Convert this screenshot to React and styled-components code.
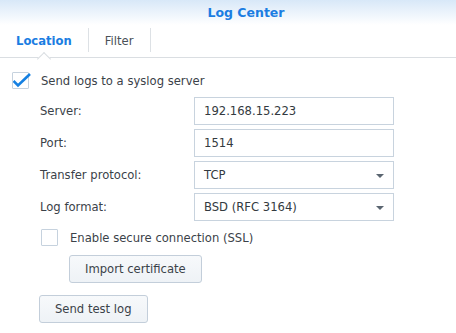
import React from 'react'
import styled, { createGlobalStyle } from 'styled-components'

const Global = createGlobalStyle`
  body {
    margin: 0;
    background: #fff;
    font-family: "DejaVu Sans", Verdana, sans-serif;
    font-size: 11.6px;
    color: #3b4249;
  }
`

const Window = styled.div`
  width: 456px;
  height: 333px;
  background: #fff;
`

const Header = styled.div`
  height: 25px;
  display: flex;
  align-items: center;
  justify-content: center;
  padding-left: 36px;
  background: linear-gradient(to bottom, #d8e8f8, #ffffff);
`

const Title = styled.div`
  font-weight: bold;
  font-size: 12.5px;
  color: #1b7de2;
`

const TabBar = styled.div`
  height: 32px;
  display: flex;
  align-items: center;
  border-bottom: 1px solid #dadee2;
`

const Tab = styled.div`
  position: relative;
  padding: 0 16px;
  height: 100%;
  display: flex;
  align-items: center;
  font-weight: ${p => (p.$active ? 'bold' : 'normal')};
  color: ${p => (p.$active ? '#1b7de2' : '#4a5158')};
  border-right: 1px solid transparent;

  &::after {
    content: '';
    position: absolute;
    right: -1px;
    top: 3px;
    height: 24px;
    width: 1px;
    background: #dde1e5;
  }

  &::before {
    content: ${p => (p.$active ? "''" : 'none')};
    position: absolute;
    left: 50%;
    bottom: -7px;
    width: 9px;
    height: 9px;
    margin-left: -5px;
    background: #fff;
    border-left: 1px solid #dadee2;
    border-top: 1px solid #dadee2;
    transform: rotate(45deg);
  }
`

const Content = styled.div`
  padding: 14px 12px 10px;
`

const CheckRow = styled.label`
  display: flex;
  align-items: center;
  gap: 12px;
  height: 17px;
  margin-left: ${p => p.$indent || 0}px;
  margin-top: ${p => p.$top || 0}px;
`

const Box = styled.span`
  position: relative;
  width: 15px;
  height: 15px;
  border: 1px solid #c6d2de;
  border-radius: 1px;
  background: #fff;
  flex: none;

  svg {
    position: absolute;
    left: 0;
    top: 0;
  }
`

const Form = styled.div`
  margin-top: 8px;
  margin-left: 28px;
  display: grid;
  grid-template-columns: 154px 200px;
  row-gap: 4px;
  align-items: center;
`

const Label = styled.div`
  color: #3b4249;
`

const Field = styled.div`
  position: relative;
  height: 28px;
  box-sizing: border-box;
  border: 1px solid #c8d3de;
  background: #fff;
  display: flex;
  align-items: center;
  padding: 0 9px;
  color: #333a40;
`

const Arrow = styled.span`
  position: absolute;
  right: 9px;
  top: 12px;
  width: 0;
  height: 0;
  border-left: 4.5px solid transparent;
  border-right: 4.5px solid transparent;
  border-top: 4.5px solid #5a6570;
`

const Button = styled.button`
  display: block;
  height: 28px;
  padding: 0 15px;
  margin-left: ${p => p.$indent || 0}px;
  margin-top: ${p => p.$top || 0}px;
  border: 1px solid #c3ceda;
  border-radius: 3px;
  background: linear-gradient(to bottom, #f7f9fb, #eef2f6);
  font-family: inherit;
  font-size: 11.6px;
  color: #3b4249;
`

function Check() {
  return (
    <svg width="20" height="17" viewBox="0 0 20 17">
      <path d="M0.5 8 L5 12.5 L17 1" fill="none" stroke="#1580e2" strokeWidth="2.6" />
    </svg>
  )
}

export default function App() {
  return (
    <Window>
      <Global />
      <Header>
        <Title>Log Center</Title>
      </Header>
      <TabBar>
        <Tab $active>Location</Tab>
        <Tab>Filter</Tab>
      </TabBar>
      <Content>
        <CheckRow>
          <Box><Check /></Box>
          Send logs to a syslog server
        </CheckRow>
        <Form>
          <Label>Server:</Label>
          <Field>192.168.15.223</Field>
          <Label>Port:</Label>
          <Field>1514</Field>
          <Label>Transfer protocol:</Label>
          <Field>TCP<Arrow /></Field>
          <Label>Log format:</Label>
          <Field>BSD (RFC 3164)<Arrow /></Field>
        </Form>
        <CheckRow $indent={29} $top={8}>
          <Box />
          Enable secure connection (SSL)
        </CheckRow>
        <Button $indent={57} $top={9}>Import certificate</Button>
        <Button $indent={27} $top={12}>Send test log</Button>
      </Content>
    </Window>
  )
}
